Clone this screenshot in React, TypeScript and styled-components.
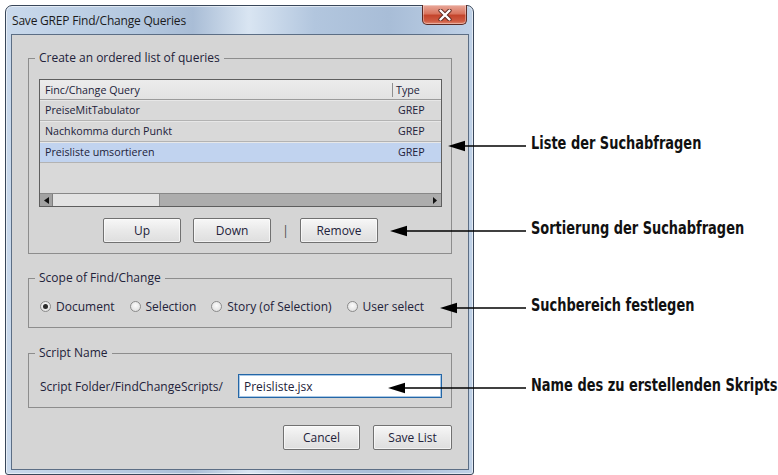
import React from "react";
import styled, { createGlobalStyle } from "styled-components";

const GlobalStyle = createGlobalStyle`
  html, body {
    margin: 0;
    padding: 0;
    background: #ffffff;
  }
  body {
    font-family: "Open Sans", "Noto Sans", sans-serif;
    font-size: 12px;
    color: #22223a;
  }
`;

const Page = styled.div`
  position: relative;
  width: 778px;
  height: 475px;
  padding: 5px 0 0 5px;
  box-sizing: border-box;
  overflow: hidden;
`;

/* ---------- window chrome ---------- */

const Window = styled.div`
  width: 469px;
  height: 470px;
  box-sizing: border-box;
  border: 1px solid #39475a;
  border-radius: 7px 7px 3px 3px;
  background:
    linear-gradient(90deg, #c9d9ec 0%, #b4c8df 28%, #a9bdd6 40%, #d9e5f2 52%, #b2c6de 66%, #a8bdd7 82%, #bfd1e7 100%);
  box-shadow: inset 0 0 0 1px rgba(255, 255, 255, 0.55);
  display: flex;
  flex-direction: column;
`;

const TitleBar = styled.div`
  height: 28px;
  display: flex;
  align-items: center;
  padding-left: 6px;
  flex-shrink: 0;
`;

const Title = styled.span`
  font-family: "Open Sans", "Noto Sans", sans-serif;
  font-size: 12px;
  color: #1b1b1b;
  letter-spacing: -0.2px;
`;

const CloseButton = styled.div`
  margin-left: auto;
  margin-right: 6px;
  align-self: flex-start;
  margin-top: -1px;
  width: 45px;
  height: 20px;
  box-sizing: border-box;
  border: 1px solid #5a2a24;
  border-top: none;
  border-radius: 0 0 5px 5px;
  background: linear-gradient(#e9a99b 0%, #d9755f 45%, #c4452c 55%, #cf5b42 85%, #e08a73 100%);
  box-shadow: inset 0 0 0 1px rgba(255, 255, 255, 0.35);
  display: flex;
  align-items: center;
  justify-content: center;
`;

const Client = styled.div`
  flex: 1;
  margin: 0 4px 4px 5px;
  border: 1px solid #5c6e85;
  background: #d5d5d5;
  display: flex;
  flex-direction: column;
  padding: 16px 16px 0 16px;
`;

/* ---------- group boxes ---------- */

const Group = styled.fieldset<{ $pt: number; $pb: number; $mt: number }>`
  margin: ${(p) => p.$mt}px 0 0 0;
  padding: ${(p) => p.$pt}px 9px ${(p) => p.$pb}px 10px;
  border: 1px solid #8d8d8d;
  min-width: 0;
  box-sizing: border-box;
`;

const Legend = styled.legend`
  padding: 0 4px;
  margin-left: -4px;
  line-height: 14px;
  height: 14px;
`;

/* ---------- query list ---------- */

const ListBox = styled.div`
  height: 128px;
  box-sizing: border-box;
  border: 1px solid #5e5e5e;
  background: #d9d9d9;
  display: flex;
  flex-direction: column;
  font-size: 10.7px;
`;

const HeaderRow = styled.div`
  display: grid;
  grid-template-columns: 1fr 49px;
  height: 19px;
  border-bottom: 1px solid #9b9b9b;
  background: linear-gradient(#ececec, #e2e2e2);
  align-items: center;
`;

const HeaderCell = styled.div<{ $divider?: boolean }>`
  padding-left: ${(p) => (p.$divider ? 3 : 5)}px;
  border-left: ${(p) => (p.$divider ? "1px solid #8f8f8f" : "none")};
  height: 14px;
  line-height: 14px;
  white-space: nowrap;
`;

const QueryRow = styled.div<{ $selected?: boolean }>`
  display: grid;
  grid-template-columns: 1fr 49px;
  align-items: center;
  height: 20px;
  border-bottom: 1px solid #b3b3b3;
  box-shadow: inset 0 1px 0 #e7e7e7;
  background: ${(p) => (p.$selected ? "#c1d3ef" : "transparent")};
`;

const Cell = styled.div<{ $type?: boolean }>`
  padding-left: ${(p) => (p.$type ? 6 : 5)}px;
  white-space: nowrap;
`;

const HScroll = styled.div`
  margin-top: auto;
  height: 12px;
  border-top: 1px solid #888888;
  background: #adadad;
  display: flex;
  align-items: stretch;
`;

const ScrollArrow = styled.div<{ $right?: boolean }>`
  width: 13px;
  box-sizing: border-box;
  display: flex;
  align-items: center;
  justify-content: center;
  background: ${(p) => (p.$right ? "transparent" : "#a2a2a2")};
  border-right: ${(p) => (p.$right ? "none" : "1px solid #7f7f7f")};
  margin-left: ${(p) => (p.$right ? "auto" : "0")};
`;

const Thumb = styled.div`
  width: 106px;
  background: #e3e3e3;
  border-right: 1px solid #8e8e8e;
`;

/* ---------- buttons ---------- */

const ButtonRow = styled.div<{ $justify: string; $mt: number; $gap: number }>`
  display: flex;
  justify-content: ${(p) => p.$justify};
  align-items: center;
  gap: ${(p) => p.$gap}px;
  margin-top: ${(p) => p.$mt}px;
`;

const Button = styled.button<{ $w: number }>`
  width: ${(p) => p.$w}px;
  height: 25px;
  box-sizing: border-box;
  padding: 0;
  border: 1px solid #717171;
  border-radius: 2px;
  background: linear-gradient(#f7f7f7, #e9e9e9 50%, #dedede);
  box-shadow: inset 0 0 0 1px rgba(255, 255, 255, 0.6);
  font: inherit;
  color: #22223a;
`;

const Divider = styled.span`
  width: 29px;
  text-align: center;
  color: #4a4a4a;
  margin: 0 -12px;
`;

/* ---------- scope radios ---------- */

const RadioRow = styled.div`
  display: flex;
  align-items: center;
  gap: 15px;
  height: 16px;
  padding-left: 1px;
`;

const RadioLabel = styled.label`
  display: flex;
  align-items: center;
  gap: 5px;
  white-space: nowrap;
`;

const RadioDot = styled.span<{ $checked?: boolean }>`
  width: 11px;
  height: 11px;
  box-sizing: border-box;
  border-radius: 50%;
  border: 1px solid #8b8b8b;
  background: radial-gradient(circle at 50% 40%, #fbfbfb 0%, #e4e4e4 70%, #d2d2d2 100%);
  display: flex;
  align-items: center;
  justify-content: center;
  &::after {
    content: "";
    width: 5px;
    height: 5px;
    border-radius: 50%;
    background: ${(p) => (p.$checked ? "#2a2a2a" : "transparent")};
  }
`;

/* ---------- script name ---------- */

const NameRow = styled.div`
  display: flex;
  align-items: center;
  padding-left: 1px;
`;

const NameInput = styled.div`
  margin-left: auto;
  width: 204px;
  height: 24px;
  box-sizing: border-box;
  border: 1px solid #2466a6;
  box-shadow: inset 0 0 0 1px #a9c8e6;
  background: #ffffff;
  display: flex;
  align-items: center;
  padding-left: 5px;
`;

/* ---------- callouts ---------- */

const CalloutLayer = styled.div`
  position: absolute;
  inset: 0;
  pointer-events: none;
`;

const Callout = styled.div`
  position: absolute;
  display: flex;
  align-items: center;
  height: 24px;
  gap: 5px;
`;

const CalloutText = styled.span`
  font-family: "DejaVu Sans Condensed", "Liberation Sans Narrow", "DejaVu Sans", sans-serif;
  font-stretch: condensed;
  font-weight: bold;
  font-size: 18px;
  color: #111111;
  white-space: nowrap;
  display: inline-block;
  transform: scaleX(0.8);
  transform-origin: left center;
  margin-bottom: 7px;
`;

type Pointer = { tip: number; y: number; label: string };

const pointers: Pointer[] = [
  { tip: 448, y: 146, label: "Liste der Suchabfragen" },
  { tip: 390, y: 231, label: "Sortierung der Suchabfragen" },
  { tip: 440, y: 308, label: "Suchbereich festlegen" },
  { tip: 388, y: 388, label: "Name des zu erstellenden Skripts" },
];

const LINE_END = 526;

function Arrow({ length }: { length: number }) {
  return (
    <svg width={length} height={12} viewBox={`0 0 ${length} 12`}>
      <line x1={14} y1={6} x2={length} y2={6} stroke="#000" strokeWidth={1.7} />
      <polygon points={`0,6 17,0.8 17,11.2`} fill="#000" />
    </svg>
  );
}

const queries = [
  { name: "PreiseMitTabulator", type: "GREP" },
  { name: "Nachkomma durch Punkt", type: "GREP" },
  { name: "Preisliste umsortieren", type: "GREP", selected: true },
];

const scopes = ["Document", "Selection", "Story (of Selection)", "User select"];

export default function App() {
  return (
    <>
      <GlobalStyle />
      <Page>
        <Window>
          <TitleBar>
            <Title>Save GREP Find/Change Queries</Title>
            <CloseButton>
              <svg width="14" height="12" viewBox="0 0 14 12">
                <path d="M2.5 1.5 L11.5 10.5 M11.5 1.5 L2.5 10.5" stroke="#5b2a22" strokeWidth="4.2" strokeLinecap="round" />
                <path d="M2.5 1.5 L11.5 10.5 M11.5 1.5 L2.5 10.5" stroke="#ffffff" strokeWidth="2.4" strokeLinecap="round" />
              </svg>
            </CloseButton>
          </TitleBar>
          <Client>
            <Group $pt={14} $pb={10} $mt={0}>
              <Legend>Create an ordered list of queries</Legend>
              <ListBox>
                <HeaderRow>
                  <HeaderCell>Finc/Change Query</HeaderCell>
                  <HeaderCell $divider>Type</HeaderCell>
                </HeaderRow>
                {queries.map((q) => (
                  <QueryRow key={q.name} $selected={q.selected}>
                    <Cell>{q.name}</Cell>
                    <Cell $type>{q.type}</Cell>
                  </QueryRow>
                ))}
                <HScroll>
                  <ScrollArrow>
                    <svg width="5" height="7" viewBox="0 0 5 7">
                      <polygon points="0,3.5 5,0 5,7" fill="#111" />
                    </svg>
                  </ScrollArrow>
                  <Thumb />
                  <ScrollArrow $right>
                    <svg width="4" height="7" viewBox="0 0 4 7">
                      <polygon points="4,3.5 0,0 0,7" fill="#111" />
                    </svg>
                  </ScrollArrow>
                </HScroll>
              </ListBox>
              <ButtonRow $justify="center" $mt={11} $gap={12}>
                <Button $w={78}>Up</Button>
                <Button $w={78}>Down</Button>
                <Divider>|</Divider>
                <Button $w={78}>Remove</Button>
              </ButtonRow>
            </Group>

            <Group $pt={13} $pb={13} $mt={17}>
              <Legend>Scope of Find/Change</Legend>
              <RadioRow>
                {scopes.map((s, i) => (
                  <RadioLabel key={s}>
                    <RadioDot $checked={i === 0} />
                    {s}
                  </RadioLabel>
                ))}
              </RadioRow>
            </Group>

            <Group $pt={14} $pb={9} $mt={18}>
              <Legend>Script Name</Legend>
              <NameRow>
                Script Folder/FindChangeScripts/
                <NameInput>Preisliste.jsx</NameInput>
              </NameRow>
            </Group>

            <ButtonRow $justify="flex-end" $mt={17} $gap={13}>
              <Button $w={77}>Cancel</Button>
              <Button $w={79}>Save List</Button>
            </ButtonRow>
          </Client>
        </Window>

        <CalloutLayer>
          {pointers.map((p) => (
            <Callout key={p.label} style={{ left: p.tip, top: p.y - 12 }}>
              <Arrow length={LINE_END - p.tip} />
              <CalloutText>{p.label}</CalloutText>
            </Callout>
          ))}
        </CalloutLayer>
      </Page>
    </>
  );
}
